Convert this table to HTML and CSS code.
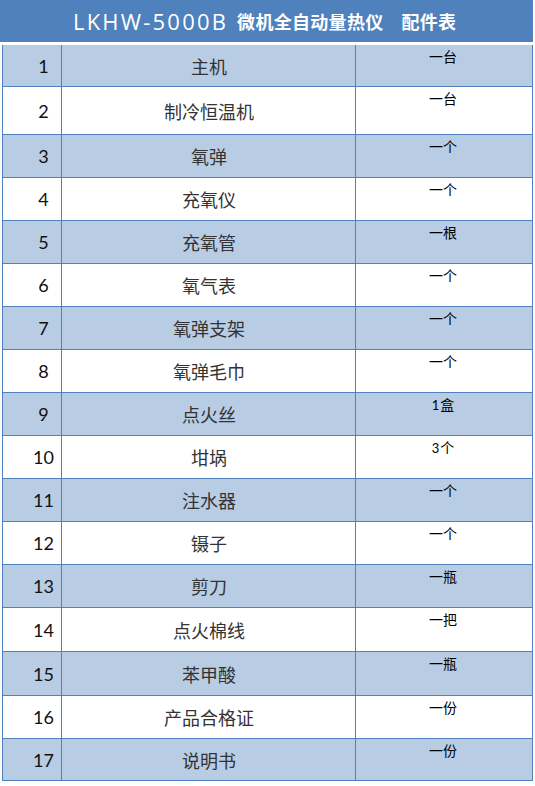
FILE: index.html
```html
<!DOCTYPE html>
<html lang="zh-CN">
<head>
<meta charset="utf-8">
<title>LKHW-5000B 配件表</title>
<link rel="stylesheet" href="styles.css">
</head>
<body>
<div class="page">
  <div class="header">
    <span class="model">LKHW-5000B</span>
    <span class="title">微机全自动量热仪</span>
    <span class="title sub">配件表</span>
  </div>
  <div class="sheet">
    <div class="row"><div class="c num">1</div><div class="c name">主机</div><div class="c qty">一台</div></div>
    <div class="row"><div class="c num">2</div><div class="c name">制冷恒温机</div><div class="c qty">一台</div></div>
    <div class="row"><div class="c num">3</div><div class="c name">氧弹</div><div class="c qty">一个</div></div>
    <div class="row"><div class="c num">4</div><div class="c name">充氧仪</div><div class="c qty">一个</div></div>
    <div class="row"><div class="c num">5</div><div class="c name">充氧管</div><div class="c qty">一根</div></div>
    <div class="row"><div class="c num">6</div><div class="c name">氧气表</div><div class="c qty">一个</div></div>
    <div class="row"><div class="c num">7</div><div class="c name">氧弹支架</div><div class="c qty">一个</div></div>
    <div class="row"><div class="c num">8</div><div class="c name">氧弹毛巾</div><div class="c qty">一个</div></div>
    <div class="row"><div class="c num">9</div><div class="c name">点火丝</div><div class="c qty"><span class="d">1</span>盒</div></div>
    <div class="row"><div class="c num">10</div><div class="c name">坩埚</div><div class="c qty"><span class="d">3</span>个</div></div>
    <div class="row"><div class="c num">11</div><div class="c name">注水器</div><div class="c qty">一个</div></div>
    <div class="row"><div class="c num">12</div><div class="c name">镊子</div><div class="c qty">一个</div></div>
    <div class="row"><div class="c num">13</div><div class="c name">剪刀</div><div class="c qty">一瓶</div></div>
    <div class="row"><div class="c num">14</div><div class="c name">点火棉线</div><div class="c qty">一把</div></div>
    <div class="row"><div class="c num">15</div><div class="c name">苯甲酸</div><div class="c qty">一瓶</div></div>
    <div class="row"><div class="c num">16</div><div class="c name">产品合格证</div><div class="c qty">一份</div></div>
    <div class="row"><div class="c num">17</div><div class="c name">说明书</div><div class="c qty">一份</div></div>
  </div>
</div>
</body>
</html>
```

FILE: styles.css
```css
html, body {
  margin: 0;
  padding: 0;
  background: #ffffff;
}

.page {
  width: 533px;
}

.header {
  height: 42px;
  background: #4f81bd;
  color: #ffffff;
  display: flex;
  align-items: center;
  padding-left: 73px;
  box-sizing: border-box;
  margin-bottom: 3px;
}

.model {
  font-family: "Open Sans", "DejaVu Sans", sans-serif;
  font-weight: 400;
  font-size: 22px;
  letter-spacing: 2.2px;
  margin-right: 9px;
}

.title {
  font-family: "Noto Sans CJK SC", sans-serif;
  font-weight: 700;
  font-size: 18px;
  line-height: 1;
  letter-spacing: 0.3px;
}

.title.sub {
  margin-left: 18px;
}

.sheet {
  margin-left: 2px;
  width: 531px;
  border-left: 1px solid #4f81bd;
  border-right: 1px solid #4f81bd;
  box-sizing: border-box;
}

.row {
  display: grid;
  grid-template-columns: 59px 294px 176px;
  height: 43px;
  box-sizing: border-box;
  border-bottom: 1px solid #4f81bd;
  background: #ffffff;
}

.row:nth-child(odd) {
  background: #b8cce4;
}

.row:nth-child(1) { height: 42px; }
.row:nth-child(2) { height: 48px; }
.row:nth-child(14),
.row:nth-child(15) { height: 44px; }
.row:nth-child(17) { height: 42px; }

.c {
  box-sizing: border-box;
}

.num {
  border-right: 1px solid #4f81bd;
  display: flex;
  align-items: center;
  justify-content: center;
  padding-left: 23px;
  font-family: "Lato", "Open Sans", sans-serif;
  font-size: 18px;
  color: #111111;
}

.name {
  border-right: 1px solid #4f81bd;
  display: flex;
  align-items: center;
  justify-content: center;
  padding-left: 1px;
  font-family: "Noto Sans CJK SC", sans-serif;
  font-size: 18px;
  color: #333333;
}

.qty {
  text-align: center;
  padding-top: 2px;
  padding-right: 2px;
  font-family: "Noto Sans CJK SC", sans-serif;
  font-size: 14px;
  line-height: 18px;
  color: #000000;
}

.d {
  font-family: "Lato", "Open Sans", sans-serif;
  font-size: 13px;
  margin-right: 1px;
}
```
